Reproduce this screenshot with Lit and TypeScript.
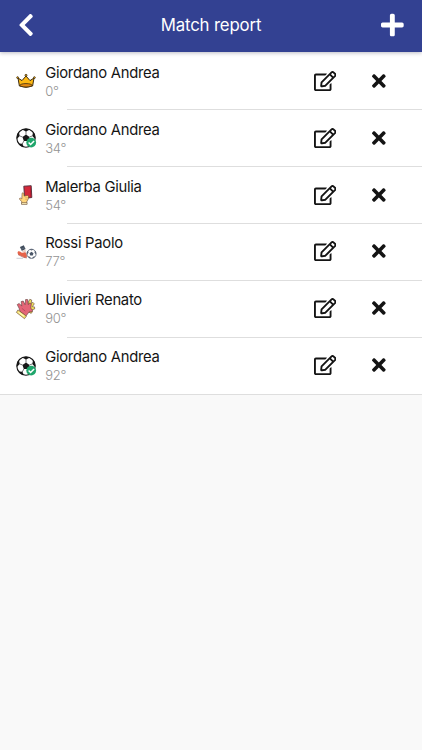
import { LitElement, html, svg, css } from "lit";
import { customElement } from "lit/decorators.js";

const crown = svg`<g stroke="#3a2a12" stroke-width="1" stroke-linejoin="round">
  <path d="M2 7 L6 9.6 L10 5 L14 9.6 L18 7 L16.6 15 Q10 17.6 3.4 15Z" fill="#fcb813"/>
  <ellipse cx="10" cy="14.3" rx="6" ry="1.7" fill="#e58a10" stroke-width=".8"/>
  <circle cx="1.6" cy="6.6" r=".9" fill="#fcb813" stroke-width=".8"/><circle cx="10" cy="4.3" r="1" fill="#fcb813" stroke-width=".8"/><circle cx="18.4" cy="6.6" r=".9" fill="#fcb813" stroke-width=".8"/></g>`;

const ball = svg`<circle cx="10" cy="10" r="9.2" fill="#fff" stroke="#171717" stroke-width="1.1"/>
  <g fill="#171717"><path d="M10 6.4l3.5 2.5-1.3 4.1H7.8L6.5 8.9z"/>
  <path d="M6 1.5 10 3.4l4-1.9Q10 -.1 6 1.5zM.9 11l2.8-3.1-.8-4Q.2 7 .9 11zM19.1 11l-2.8-3.1.8-4q2.8 3.1 2 7.1zM2.6 15.4l3.8.4 1.5 3.3Q4.5 18.6 2.6 15.4zM17.4 15.4l-3.8.4-1.5 3.3q3.6-.5 5.3-3.7z"/></g>
  <path d="M10 3v3.6M3.6 7.9l3 1.1M16.4 7.9l-3 1.1M6.2 16l1.7-3M13.8 16l-1.7-3" stroke="#171717" stroke-width=".6"/>`;

const goal = svg`${ball}<circle cx="15.2" cy="14.6" r="4.9" fill="#20a66c"/>
  <path d="m12.6 14.5 2 2 3.5-3.6" fill="none" stroke="#fff" stroke-width="1.5"/>`;

const card = svg`<path d="m7.8 1.2 7.4-.5.6 11.8-7.2.9z" fill="#d4293a" stroke="#4a2b38" stroke-width=".9" stroke-linejoin="round"/>
  <path d="m13.9 1.3.9-.1.5 10.8-1.1.2z" fill="#b51c30"/>
  <path d="M6.1 8.2c.9-.8 1.7-.1 1.8.8l.3 2.1 3-.6c1.5-.1 1.7 1.3.8 1.6.9.3.7 1.6-.2 1.9.5.5.2 1.5-.7 1.7l-.4 1.7v1.4H5.8v-2l-2-2.3q-.8-1.5.6-1.4l1.4.8z" fill="#ffd57c" stroke="#6b4a30" stroke-width=".6" stroke-linejoin="round"/>
  <path d="M9.2 12.7h2.3M9.2 14.3h2" stroke="#c48b45" stroke-width=".45"/><path d="M5.5 17.6h5.6v1.8H5.5z" fill="#fff0b8" stroke="#593b27" stroke-width=".5"/>`;

const assist = svg`<path d="m3.9 5 3.9-1.7L9.6 7 5.9 9z" fill="#414d5d"/><path d="m5 7.4 4-1.9" stroke="#75808a" stroke-width=".6"/>
  <path d="m5.9 9.1 3.5-1.7.7 2q-1.7 1.6-3.3 1.1z" fill="#ecd0c4"/>
  <path d="M2.2 9.2Q3.9 9 5.3 10.5q2.1.9 3.9-.4 1.9 2.2 1.7 5.1-1.3.9-3.2-.2L2.2 12.4q-1.3-1.5 0-3.2z" fill="#e7644a"/>
  <path d="m2 12.5 5.6 2.9 3.3.5" stroke="#a64a43" stroke-width=".7" fill="none"/><path d="M.5 16.3H7" stroke="#c6cad0" stroke-width=".9"/>
  <g transform="translate(10.5 6.8) scale(.5)">
    <circle cx="10" cy="10" r="9.2" fill="#fff" stroke="#4b5769" stroke-width="1.6"/>
    <g fill="#4b5769"><path d="M10 5.8l4 2.9-1.5 4.8h-5L6 8.7z"/><path d="M6 1.6 10 3.6l4-2Q10 0 6 1.6zM1 11l3-3-.8-4.2Q.2 7 1 11zM19 11l-3-3 .8-4.2Q19.8 7 19 11zM2.9 15.4l4 .4 1.5 3.2Q4.7 18.8 2.9 15.4zM17.1 15.4l-4 .4-1.5 3.2q3.7-.2 5.5-3.6z"/></g></g>`;

const gloves = svg`<g stroke="#54342f" stroke-width=".55" stroke-linejoin="round">
  <path d="m12.3 3.2 1.5-2.9 1.9.7-.4 3.5 1.6-1.2 1.4 1.6-2 2.8 2.2.2.2 2-3 1.1.9 1.9-1.6 1.5-5.1-3.1z" fill="#f0df5e"/>
  <path d="M3.1 9.3 1.2 5.6l2-1.2 2.6 2.7-.7-4.5 2.1-.6 1.9 3.7.5-5.2 2.1.1.6 5 1.4-1.7 1.6.9-.5 4.3 1.8 2.3-1.2 1.6-2.2-.2-3.2 4.2-6-4.4z" fill="#e46577"/>
  <path d="m1.9 10.9 8.5 6.2-1.9 2.6L.4 13.4z" fill="#f8e36b"/></g>
  <path d="m2.6 13.3 5.3 4" stroke="#fff8c0" stroke-width="1.1"/><path d="m5.8 9.3 3.5 2.8" stroke="#ad3d54" stroke-width=".7"/>`;

const art = { crown, goal, card, assist, gloves };

const shapes = {
  back: svg`<path d="M34.52 239.03L228.87 44.69c9.37-9.37 24.57-9.37 33.94 0l22.67 22.67c9.36 9.36 9.37 24.52.04 33.9L131.49 256l154.02 154.75c9.34 9.38 9.32 24.54-.04 33.9l-22.67 22.67c-9.37 9.37-24.57 9.37-33.94 0L34.52 272.97c-9.37-9.37-9.37-24.57 0-33.94z"/>`,
  plus: svg`<path d="M416 208H272V64c0-17.67-14.33-32-32-32h-32c-17.67 0-32 14.33-32 32v144H32c-17.67 0-32 14.33-32 32v32c0 17.67 14.33 32 32 32h144v144c0 17.67 14.33 32 32 32h32c17.67 0 32-14.33 32-32V304h144c17.67 0 32-14.33 32-32v-32c0-17.67-14.33-32-32-32z"/>`,
  edit: svg`<path d="M402.3 344.9l32-32c5-5 13.7-1.5 13.7 5.7V464c0 26.5-21.5 48-48 48H48c-26.5 0-48-21.5-48-48V112c0-26.5 21.5-48 48-48h273.5c7.1 0 10.7 8.6 5.7 13.7l-32 32c-1.5 1.5-3.5 2.3-5.7 2.3H48v352h352V350.5c0-2.1.8-4.1 2.3-5.6zm156.6-201.8L296.3 405.7l-90.4 10c-26.2 2.9-48.5-19.2-45.6-45.6l10-90.4L432.9 17.1c22.9-22.9 59.9-22.9 82.7 0l43.2 43.2c22.9 22.9 22.9 60 .1 82.8zM460.1 174L402 115.9 216.2 301.8l-7.3 65.3 65.3-7.3L460.1 174zm64.8-79.7l-43.2-43.2c-4.1-4.1-10.8-4.1-14.8 0L436 82l58.1 58.1 30.9-30.9c4-4.2 4-10.8-.1-14.9z"/>`,
  times: svg`<path d="M242.72 256l100.07-100.07c12.28-12.28 12.28-32.19 0-44.48l-22.24-22.24c-12.28-12.28-32.19-12.28-44.48 0L176 189.28 75.93 89.21c-12.28-12.28-32.19-12.28-44.48 0L9.21 111.45c-12.28 12.28-12.28 32.19 0 44.48L109.28 256 9.21 356.07c-12.28 12.28-12.28 32.19 0 44.48l22.24 22.24c12.28 12.28 32.2 12.28 44.48 0L176 322.72l100.07 100.07c12.28 12.28 32.2 12.28 44.48 0l22.24-22.24c12.28-12.28 12.28-32.19 0-44.48L242.72 256z"/>`,
};

type Row = { kind: keyof typeof art; name: string; minute: number };

const rows: Row[] = [
  { kind: "crown", name: "Giordano Andrea", minute: 0 },
  { kind: "goal", name: "Giordano Andrea", minute: 34 },
  { kind: "card", name: "Malerba Giulia", minute: 54 },
  { kind: "assist", name: "Rossi Paolo", minute: 77 },
  { kind: "gloves", name: "Ulivieri Renato", minute: 90 },
  { kind: "goal", name: "Giordano Andrea", minute: 92 },
];

@customElement("app-root")
export class AppRoot extends LitElement {
  static styles = css`
    :host { display: flex; flex-direction: column; height: 100vh; background: #f9f9f9; color: #141414; font-family: Inter, "Liberation Sans", sans-serif; }
    * { box-sizing: border-box; }
    svg { display: block; fill: currentColor; flex: none; }
    button { border: 0; padding: 0; background: none; color: inherit; display: flex; justify-content: center; }
    header { flex: none; height: 52px; padding-bottom: 2px; display: grid; grid-template-columns: 51.5px 1fr 58.5px; align-items: center; background: #334192; color: #fff; box-shadow: 0 1px 4px rgba(30, 30, 60, .3); z-index: 1; }
    h1 { margin: 0; font-size: 16.8px; line-height: 24px; font-weight: 400; text-align: center; letter-spacing: -.15px; padding-left: 7px; }
    .back svg { width: 16.2px; height: 26px; }
    .add svg { width: 22.7px; height: 26px; }
    .list { flex: none; background: #fff; border-bottom: 1px solid #dedede; padding-top: .85px; }
    .row { height: 56.85px; display: flex; padding-left: 16px; position: relative; }
    .art { width: 20px; height: 20px; margin-top: 18.5px; overflow: visible; fill: none; }
    .body { flex: 1; margin-left: 9.2px; padding-top: 10px; }
    .name { font-size: 14.8px; line-height: 20px; letter-spacing: -.27px; }
    .minute { font-size: 13px; line-height: 16px; font-weight: 300; letter-spacing: -.25px; color: #939393; }
    .edit { width: 23px; margin: 18px 35.7px 0 0; height: 20px; }
    .edit svg { width: 22.5px; height: 20px; }
    .remove { width: 14px; margin: 18px 35.7px 0 0; height: 20px; }
    .remove svg { width: 13.7px; height: 20px; }
    .row:not(:last-child)::after { content: ""; position: absolute; left: 67px; right: 0; bottom: -.5px; height: 1px; background: #dedede; }
  `;

  render() {
    return html`
      <header>
        <button class="back" aria-label="Back"><svg viewBox="0 0 320 512">${shapes.back}</svg></button>
        <h1><span>Match report</span></h1>
        <button class="add" aria-label="Add"><svg viewBox="0 0 448 512">${shapes.plus}</svg></button>
      </header>
      <div class="list">
        ${rows.map((r) => html`
          <div class="row">
            <svg class="art" viewBox="0 0 20 20">${art[r.kind]}</svg>
            <div class="body">
              <div class="name"><span>${r.name}</span></div>
              <div class="minute"><span>${r.minute}°</span></div>
            </div>
            <button class="edit" aria-label="Edit"><svg viewBox="0 0 576 512">${shapes.edit}</svg></button>
            <button class="remove" aria-label="Remove"><svg viewBox="0 0 352 512">${shapes.times}</svg></button>
          </div>`)}
      </div>`;
  }
}
